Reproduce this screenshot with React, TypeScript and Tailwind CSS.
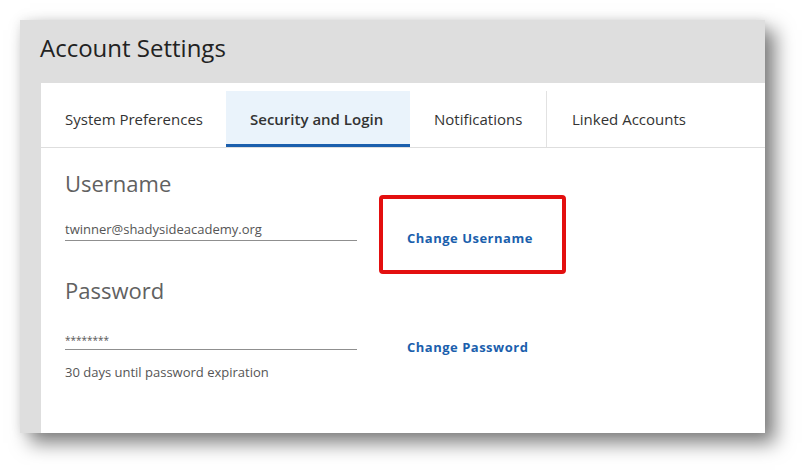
import React from "react";

const tabs = [
  { label: "System Preferences", width: "w-[185px]" },
  { label: "Security and Login", width: "w-[184px]", active: true },
  { label: "Notifications", width: "w-[137px]", divider: true },
  { label: "Linked Accounts", width: "w-[160px]", last: true },
];

function Tabs() {
  return (
    <div className="mt-2 flex border-b border-[#dedede]">
      {tabs.map((tab) => (
        <div
          key={tab.label}
          className={
            tab.active
              ? `${tab.width} h-[56px] flex items-center pl-6 bg-[#eaf3fb] border-b-[3px] border-[#1b5fad] pt-[3px] font-semibold text-[#333]`
              : tab.divider
              ? `${tab.width} h-[56px] flex items-center pl-6 border-r border-[#e2e2e2] text-[#333]`
              : tab.last
              ? `${tab.width} h-[56px] flex items-center pl-[25px] text-[#333]`
              : `${tab.width} h-[56px] flex items-center pl-6 text-[#333]`
          }
        >
          <span className="text-[15px] whitespace-nowrap">{tab.label}</span>
        </div>
      ))}
    </div>
  );
}

function SecurityPanel() {
  return (
    <div className="pl-6 pt-5">
      <h2 className="text-[22px] leading-[30px] text-[#616161]">Username</h2>
      <div className="mt-[22px] flex items-start">
        <div className="w-[292px] border-b border-[#8f8f8f] pb-[2px] text-[13px] leading-[18px] text-[#555]">
          twinner@shadysideacademy.org
        </div>
        <div className="relative ml-[50px] mt-[9px]">
          <button className="block text-[13px] leading-[18px] font-bold tracking-[0.5px] text-[#1b5fad]">
            Change Username
          </button>
          {/* annotation box drawn over the screenshot */}
          <div className="absolute left-[-28px] top-[-34px] w-[187px] h-[79px] rounded-[4px] border-4 border-[#e30f0f]" />
        </div>
      </div>

      <h2 className="mt-[28px] text-[22px] leading-[30px] text-[#616161]">Password</h2>
      <div className="mt-[25px] flex items-start">
        <div className="w-[292px] h-[20px] border-b border-[#8f8f8f] text-[10px] leading-[18px] text-[#555] pt-px">
          ********
        </div>
        <button className="block ml-[50px] mt-[8px] text-[13px] leading-[18px] font-bold tracking-[0.5px] text-[#1b5fad]">
          Change Password
        </button>
      </div>
      <p className="mt-[7px] text-[13px] leading-[18px] text-[#555]">
        30 days until password expiration
      </p>
    </div>
  );
}

export default function App() {
  return (
    <div className="min-h-screen bg-white pt-5 pl-5 font-['Open_Sans','Noto_Sans',sans-serif]">
      <div className="w-[745px] h-[413px] bg-[#dedede] flex flex-col shadow-[10px_10px_18px_rgba(0,0,0,0.5),0_0_10px_rgba(0,0,0,0.08)]">
        <div className="h-[63px] flex items-center pl-5 pb-2 text-[24px] text-[#222]">
          Account Settings
        </div>
        <div className="ml-[21px] flex-1 bg-white flex flex-col">
          <Tabs />
          <SecurityPanel />
        </div>
      </div>
    </div>
  );
}
